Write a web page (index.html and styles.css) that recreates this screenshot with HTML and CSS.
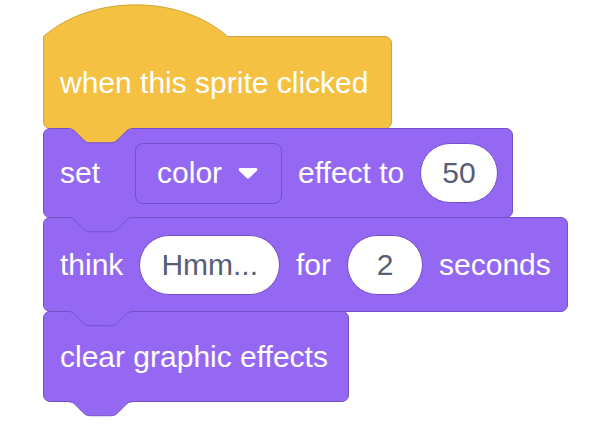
FILE: index.html
```html
<!DOCTYPE html>
<html lang="en">
<head>
    <meta charset="UTF-8">
    <title>Sprite script</title>
    <link rel="stylesheet" href="styles.css">
</head>
<body>
    <div class="script">
        <div class="block hat">
            <svg class="hat-cap" viewBox="0 0 186 35">
                <path class="cap-fill" d="M0.5,33.5 C48.5,-8.7 136.9,-8.7 184.5,33.5 L184.5,35 L0.5,35 Z"/>
                <path class="cap-line" d="M0.5,33.5 C48.5,-8.7 136.9,-8.7 184.5,33.5"/>
            </svg>
            <span class="label">when this sprite clicked</span>
            <svg class="tab" viewBox="0 0 66 17">
                <rect x="1" y="0" width="63" height="1.5"/>
                <path d="M0.5,0.5 c3.56,0 5.34,1.78 7.12,3.56 l7.12,7.12 c1.78,1.78 3.56,3.56 7.12,3.56 h21.36 c3.56,0 5.34,-1.78 7.12,-3.56 l7.12,-7.12 c1.78,-1.78 3.56,-3.56 7.12,-3.56"/>
            </svg>
        </div>

        <div class="block looks">
            <span class="label set">set</span>
            <span class="dropdown">
                <span>color</span>
                <svg class="arrow" viewBox="0 0 20 12">
                    <path d="M2.2,1 H17.8 a1.6,1.6 0 0 1 1.1,2.7 L11.3,10.9 a1.8,1.8 0 0 1 -2.6,0 L1.1,3.7 A1.6,1.6 0 0 1 2.2,1 Z"/>
                </svg>
            </span>
            <span class="label">effect to</span>
            <span class="oval">50</span>
            <svg class="tab" viewBox="0 0 66 17">
                <rect x="1" y="0" width="63" height="1.5"/>
                <path d="M0.5,0.5 c3.56,0 5.34,1.78 7.12,3.56 l7.12,7.12 c1.78,1.78 3.56,3.56 7.12,3.56 h21.36 c3.56,0 5.34,-1.78 7.12,-3.56 l7.12,-7.12 c1.78,-1.78 3.56,-3.56 7.12,-3.56"/>
            </svg>
        </div>

        <div class="block looks think">
            <span class="label">think</span>
            <span class="oval">Hmm...</span>
            <span class="label">for</span>
            <span class="oval">2</span>
            <span class="label">seconds</span>
            <svg class="tab" viewBox="0 0 66 17">
                <rect x="1" y="0" width="63" height="1.5"/>
                <path d="M0.5,0.5 c3.56,0 5.34,1.78 7.12,3.56 l7.12,7.12 c1.78,1.78 3.56,3.56 7.12,3.56 h21.36 c3.56,0 5.34,-1.78 7.12,-3.56 l7.12,-7.12 c1.78,-1.78 3.56,-3.56 7.12,-3.56"/>
            </svg>
        </div>

        <div class="block looks plain">
            <span class="label">clear graphic effects</span>
            <svg class="tab" viewBox="0 0 66 17">
                <rect x="1" y="0" width="63" height="1.5"/>
                <path d="M0.5,0.5 c3.56,0 5.34,1.78 7.12,3.56 l7.12,7.12 c1.78,1.78 3.56,3.56 7.12,3.56 h21.36 c3.56,0 5.34,-1.78 7.12,-3.56 l7.12,-7.12 c1.78,-1.78 3.56,-3.56 7.12,-3.56"/>
            </svg>
        </div>
    </div>
</body>
</html>
```

FILE: styles.css
```css
body {
    margin: 0;
    background-color: #fff;
    font-family: "Liberation Sans", Arial, sans-serif;
}
.script {
    display: flex;
    flex-direction: column;
    align-items: flex-start;
    padding: 36px 0 24px 43px;
}
.block {
    position: relative;
    display: flex;
    align-items: center;
    gap: 16px;
    box-sizing: border-box;
    min-height: 90px;
    padding: 0 14px 0 16px;
    border: 1px solid #7450c8;
    border-radius: 7px;
    background-color: #9568f4;
    color: #fff;
    font-size: 30px;
}
.block + .block {
    margin-top: -1px;
}
.label {
    white-space: nowrap;
}
.set {
    margin-right: 19px;
}
.hat {
    min-height: 93px;
    padding-right: 23px;
    border-color: #d2a53c;
    border-top-left-radius: 0;
    background-color: #f4c142;
}
.hat-cap {
    position: absolute;
    left: -1px;
    top: -34px;
    width: 186px;
    height: 35px;
    overflow: visible;
}
.cap-fill {
    fill: #f4c142;
}
.cap-line {
    fill: none;
    stroke: #d2a53c;
    stroke-width: 1;
}
.think {
    min-height: 95px;
    padding-right: 16px;
}
.plain {
    min-height: 91px;
    padding-right: 20px;
}
.tab {
    position: absolute;
    left: 24px;
    top: 100%;
    width: 66px;
    height: 17px;
    overflow: visible;
    z-index: 2;
}
.tab rect,
.tab path {
    fill: #9568f4;
}
.tab path {
    stroke: #7450c8;
    stroke-width: 1;
}
.hat .tab rect,
.hat .tab path {
    fill: #f4c142;
}
.dropdown {
    display: flex;
    align-items: center;
    gap: 16px;
    box-sizing: border-box;
    height: 61px;
    padding: 0 23px 0 21px;
    border: 1px solid #7450c8;
    border-radius: 8px;
    background-color: #9568f4;
}
.arrow {
    width: 20px;
    height: 12px;
    fill: #fff;
}
.oval {
    display: flex;
    align-items: center;
    justify-content: center;
    box-sizing: border-box;
    min-width: 76px;
    height: 60px;
    padding: 0 21px;
    border: 1px solid #7450c8;
    border-radius: 30px;
    background-color: #fff;
    color: #575e75;
}
```
